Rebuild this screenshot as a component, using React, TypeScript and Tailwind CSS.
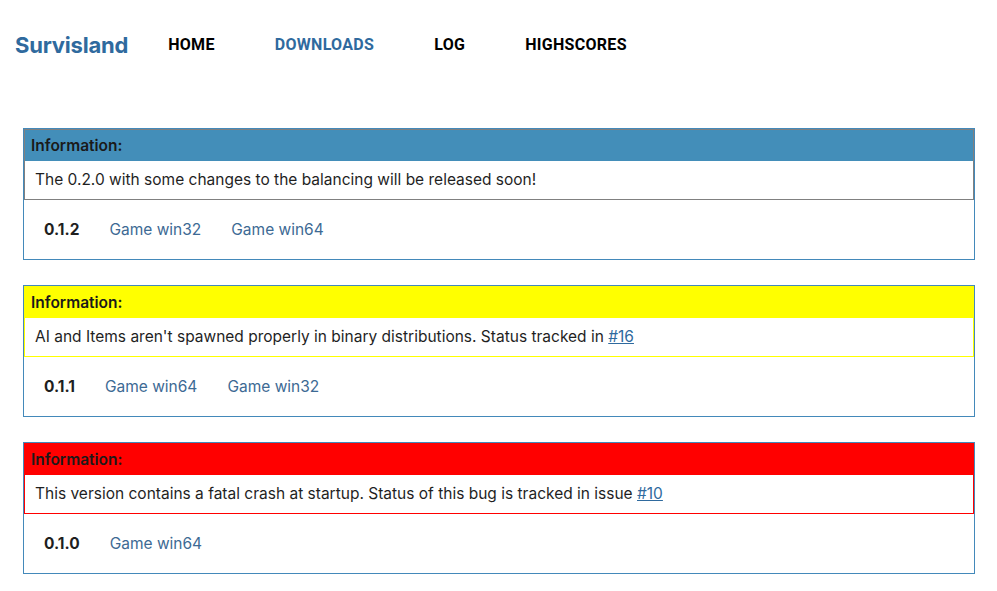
const releases = [
  {
    version: "0.1.2",
    box: "border border-[#808080]",
    head: "bg-[#438eb9]",
    message: "The 0.2.0 with some changes to the balancing will be released soon!",
    issue: null as string | null,
    files: ["Game win32", "Game win64"],
  },
  {
    version: "0.1.1",
    box: "border border-[#ffff00]",
    head: "bg-[#ffff00]",
    message: "AI and Items aren't spawned properly in binary distributions. Status tracked in ",
    issue: "#16",
    files: ["Game win64", "Game win32"],
  },
  {
    version: "0.1.0",
    box: "border border-[#ff0000]",
    head: "bg-[#ff0000]",
    message: "This version contains a fatal crash at startup. Status of this bug is tracked in issue ",
    issue: "#10",
    files: ["Game win64"],
  },
];

const nav = ["HOME", "DOWNLOADS", "LOG", "HIGHSCORES"];

export default function App() {
  return (
    <div className="min-h-screen bg-white text-[#1f1f1f] font-['Inter',sans-serif]">
      {/* HEADER */}
      <header className="flex items-center h-[90px] px-[15px]">
        <span className="text-[22px] font-bold text-[#2f6a9e] tracking-[-0.2px]">Survisland</span>
        <nav className="ml-[40px] flex gap-[60px] font-['Roboto',sans-serif] font-bold text-[16px] tracking-[0.3px]">
          {nav.map((item) => (
            <a key={item} href="#" className={item === "DOWNLOADS" ? "text-[#2f6a9e]" : "text-black"}>
              {item}
            </a>
          ))}
        </nav>
      </header>

      {/* RELEASES */}
      <main className="pt-[38px] pl-[23px] flex flex-col gap-[25px]">
        {releases.map((r) => (
          <section key={r.version} className="w-[952px] border border-[#4389ba]">
            <div className={r.box}>
              <div className={`${r.head} h-[31px] flex items-center px-[6px] font-semibold text-[15.5px] text-[#1a1a1a]`}>
                Information:
              </div>
              <div className="h-[38px] flex items-center px-[10px] text-[15.5px]">
                <span>
                  {r.message}
                  {r.issue && (
                    <a href="#" className="underline text-[#2f6a9e]">
                      {r.issue}
                    </a>
                  )}
                </span>
              </div>
            </div>
            <div className="h-[59px] flex items-center pl-[20px] gap-[30px] text-[15.5px]">
              <span className="font-bold">{r.version}</span>
              {r.files.map((f) => (
                <a key={f} href="#" className="text-[#3d6a94]">
                  {f}
                </a>
              ))}
            </div>
          </section>
        ))}
      </main>
    </div>
  );
}
